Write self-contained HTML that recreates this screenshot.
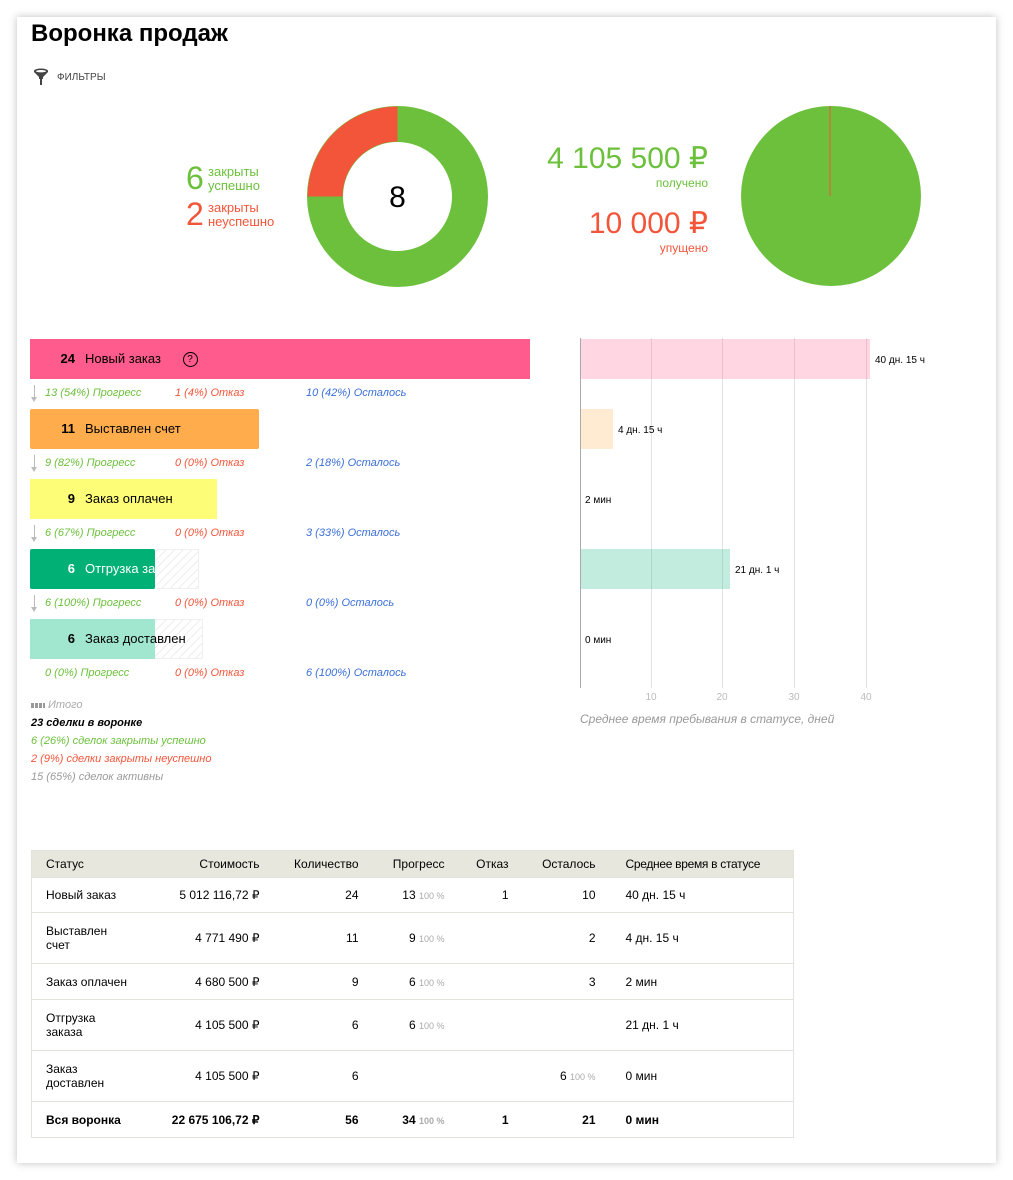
<!DOCTYPE html>
<html><head><meta charset="utf-8"><style>
body{margin:0;background:#fff;font-family:"Liberation Sans",sans-serif;}
.card{position:absolute;left:17px;top:17px;width:979px;height:1146px;background:#fff;box-shadow:0 0 8px rgba(0,0,0,.25);}
.a{position:absolute;white-space:nowrap;}
.bar{position:absolute;left:30px;height:40px;font-size:13px;line-height:40px;color:#000;white-space:nowrap;}
.bar b{display:inline-block;width:45px;text-align:right;margin-right:10px;font-weight:bold;}
.st{position:absolute;font-size:11px;font-style:italic;white-space:nowrap;}
.g{color:#6cc03c}.r{color:#f3553a}.bl{color:#3a6fd8}
.arr{position:absolute;left:34px;width:1px;height:14px;background:#bbb;}
.arr:after{content:"";position:absolute;left:-3px;top:12px;border:3.5px solid transparent;border-top:5px solid #bbb;}
.hatch{position:absolute;height:40px;background:repeating-linear-gradient(135deg,#fff 0 5px,#eee 5px 6px);border:1px solid #f0f0f0;box-sizing:border-box;}
table{position:absolute;left:31px;top:850px;width:763px;border-collapse:collapse;font-size:12px;color:#000;table-layout:fixed;border:1px solid #e3e3dc;}
th{background:#e8e7de;font-weight:normal;height:26px;padding:0;white-space:nowrap;}
td{border-top:1px solid #e3e3dc;padding:0;}
.rt{text-align:right}.p{color:#aaa;font-size:9px}
</style></head><body>
<div class="card"></div>
<div class="a" style="left:31px;top:20px;font-size:24px;font-weight:bold">Воронка продаж</div>
<svg class="a" style="left:33px;top:68px" width="16" height="18" viewBox="0 0 16 18"><path d="M1 3a7 2.5 0 0 1 14 0v1l-5 5v2H6V9L1 4z" fill="#444"/><ellipse cx="8" cy="3.2" rx="5" ry="1.2" fill="#fff"/><rect x="7" y="10" width="2" height="7" fill="#444"/></svg>
<div class="a" style="left:57px;top:72px;font-size:10px;color:#444">ФИЛЬТРЫ</div>

<div class="a g" style="left:186px;top:160px;font-size:32px">6</div>
<div class="a g" style="left:208px;top:165px;font-size:13px;line-height:14px">закрыты<br>успешно</div>
<div class="a r" style="left:186px;top:196px;font-size:32px">2</div>
<div class="a r" style="left:208px;top:201px;font-size:13px;line-height:14px">закрыты<br>неуспешно</div>
<svg class="a" style="left:307px;top:106px" width="181" height="181"><circle cx="90.5" cy="90.5" r="72.5" fill="none" stroke="#6cc03c" stroke-width="36"/><path d="M90.5 0.5A90 90 0 0 0 0.5 90.5H35.5A55 55 0 0 1 90.5 35.5z" fill="#f3553a"/><text x="90.5" y="101" font-size="30" text-anchor="middle" font-family="Liberation Sans">8</text></svg>

<div class="a g" style="right:305px;top:141px;font-size:30px">4 105 500 ₽</div>
<div class="a g" style="right:305px;top:176px;font-size:12px">получено</div>
<div class="a r" style="right:305px;top:206px;font-size:30px">10 000 ₽</div>
<div class="a r" style="right:305px;top:241px;font-size:12px">упущено</div>
<svg class="a" style="left:741px;top:106px" width="181" height="181"><circle cx="90" cy="90" r="90" fill="#6cc03c"/><line x1="89" y1="0" x2="89" y2="90" stroke="#f3553a" stroke-width="1"/></svg>

<div class="bar" style="top:339px;width:500px;background:#ff5b8c"><b>24</b>Новый заказ <span style="display:inline-block;width:13px;height:13px;border:1px solid #000;border-radius:50%;font-size:10px;line-height:13px;text-align:center;margin-left:18px;vertical-align:middle">?</span></div>
<div class="arr" style="top:385px"></div>
<div class="st g" style="left:45px;top:387px">13 (54%) Прогресс</div><div class="st r" style="left:175px;top:387px">1 (4%) Отказ</div><div class="st bl" style="left:306px;top:387px">10 (42%) Осталось</div>
<div class="bar" style="top:409px;width:229px;background:#ffad4c;border-radius:2px"><b>11</b>Выставлен счет</div>
<div class="arr" style="top:455px"></div>
<div class="st g" style="left:45px;top:457px">9 (82%) Прогресс</div><div class="st r" style="left:175px;top:457px">0 (0%) Отказ</div><div class="st bl" style="left:306px;top:457px">2 (18%) Осталось</div>
<div class="bar" style="top:479px;width:187px;background:#fdfd77"><b>9</b>Заказ оплачен</div>
<div class="arr" style="top:525px"></div>
<div class="st g" style="left:45px;top:527px">6 (67%) Прогресс</div><div class="st r" style="left:175px;top:527px">0 (0%) Отказ</div><div class="st bl" style="left:306px;top:527px">3 (33%) Осталось</div>
<div class="hatch" style="left:30px;top:549px;width:169px"></div>
<div class="bar" style="top:549px;width:125px;background:#00b075;color:#fff;overflow:hidden;border-radius:2px"><b style="color:#fff">6</b>Отгрузка заказа</div>
<div class="arr" style="top:595px"></div>
<div class="st g" style="left:45px;top:597px">6 (100%) Прогресс</div><div class="st r" style="left:175px;top:597px">0 (0%) Отказ</div><div class="st bl" style="left:306px;top:597px">0 (0%) Осталось</div>
<div class="hatch" style="left:30px;top:619px;width:173px"></div>
<div class="bar" style="top:619px;width:125px;background:#a1e6cf"><b>6</b>Заказ доставлен</div>
<div class="st g" style="left:45px;top:667px">0 (0%) Прогресс</div><div class="st r" style="left:175px;top:667px">0 (0%) Отказ</div><div class="st bl" style="left:306px;top:667px">6 (100%) Осталось</div>

<div class="st" style="left:31px;top:699px;color:#aaa"><span style="display:inline-block;width:14px;height:5px;background:repeating-linear-gradient(90deg,#999 0 3px,#fff 3px 4px)"></span> Итого</div>
<div class="st" style="left:31px;top:717px;font-weight:bold;color:#000">23 сделки в воронке</div>
<div class="st g" style="left:31px;top:735px">6 (26%) сделок закрыты успешно</div>
<div class="st r" style="left:31px;top:753px">2 (9%) сделки закрыты неуспешно</div>
<div class="st" style="left:31px;top:771px;color:#999">15 (65%) сделок активны</div>

<svg class="a" style="left:570px;top:330px" width="400" height="400" font-family="Liberation Sans">
<g stroke="#e2e2e2"><line x1="81.5" y1="8" x2="81.5" y2="358"/><line x1="152.5" y1="8" x2="152.5" y2="358"/><line x1="224.5" y1="8" x2="224.5" y2="358"/><line x1="296.5" y1="8" x2="296.5" y2="358"/></g>
<rect x="10" y="9" width="290" height="40" fill="#ff5b8c" opacity=".25"/>
<rect x="10" y="79" width="33" height="40" fill="#ffad4c" opacity=".25"/>
<rect x="10" y="219" width="150" height="40" fill="#00b075" opacity=".24"/>
<line x1="10.5" y1="8" x2="10.5" y2="358" stroke="#aaa"/>
<g font-size="10" fill="#000"><text x="305" y="33">40 дн. 15 ч</text><text x="48" y="103">4 дн. 15 ч</text><text x="15" y="173">2 мин</text><text x="165" y="243">21 дн. 1 ч</text><text x="15" y="313">0 мин</text></g>
<g font-size="10" fill="#bbb" text-anchor="middle"><text x="81" y="370">10</text><text x="152" y="370">20</text><text x="224" y="370">30</text><text x="296" y="370">40</text></g>
<text x="10" y="393" font-size="12" font-style="italic" fill="#999">Среднее время пребывания в статусе, дней</text>
</svg>

<table>
<colgroup><col style="width:114px"><col style="width:114px"><col style="width:99px"><col style="width:86px"><col style="width:64px"><col style="width:87px"><col></colgroup>
<tr><th style="text-align:left;padding-left:14px">Статус</th><th class="rt">Стоимость</th><th class="rt">Количество</th><th class="rt">Прогресс</th><th class="rt">Отказ</th><th class="rt">Осталось</th><th style="text-align:left;padding-left:30px;font-size:12px;letter-spacing:-0.3px">Среднее время в статусе</th></tr>
<tr style="height:35px"><td style="padding-left:14px">Новый заказ</td><td class="rt">5 012 116,72 ₽</td><td class="rt">24</td><td class="rt">13 <span class="p">100 %</span></td><td class="rt">1</td><td class="rt">10</td><td style="padding-left:30px">40 дн. 15 ч</td></tr>
<tr style="height:51px"><td style="padding-left:14px">Выставлен<br>счет</td><td class="rt">4 771 490 ₽</td><td class="rt">11</td><td class="rt">9 <span class="p">100 %</span></td><td></td><td class="rt">2</td><td style="padding-left:30px">4 дн. 15 ч</td></tr>
<tr style="height:36px"><td style="padding-left:14px">Заказ оплачен</td><td class="rt">4 680 500 ₽</td><td class="rt">9</td><td class="rt">6 <span class="p">100 %</span></td><td></td><td class="rt">3</td><td style="padding-left:30px">2 мин</td></tr>
<tr style="height:51px"><td style="padding-left:14px">Отгрузка<br>заказа</td><td class="rt">4 105 500 ₽</td><td class="rt">6</td><td class="rt">6 <span class="p">100 %</span></td><td></td><td></td><td style="padding-left:30px">21 дн. 1 ч</td></tr>
<tr style="height:51px"><td style="padding-left:14px">Заказ<br>доставлен</td><td class="rt">4 105 500 ₽</td><td class="rt">6</td><td></td><td></td><td class="rt">6 <span class="p">100 %</span></td><td style="padding-left:30px">0 мин</td></tr>
<tr style="height:36px;font-weight:bold"><td style="padding-left:14px">Вся воронка</td><td class="rt">22 675 106,72 ₽</td><td class="rt">56</td><td class="rt">34 <span class="p">100 %</span></td><td class="rt">1</td><td class="rt">21</td><td style="padding-left:30px">0 мин</td></tr>
</table>
</body></html>
